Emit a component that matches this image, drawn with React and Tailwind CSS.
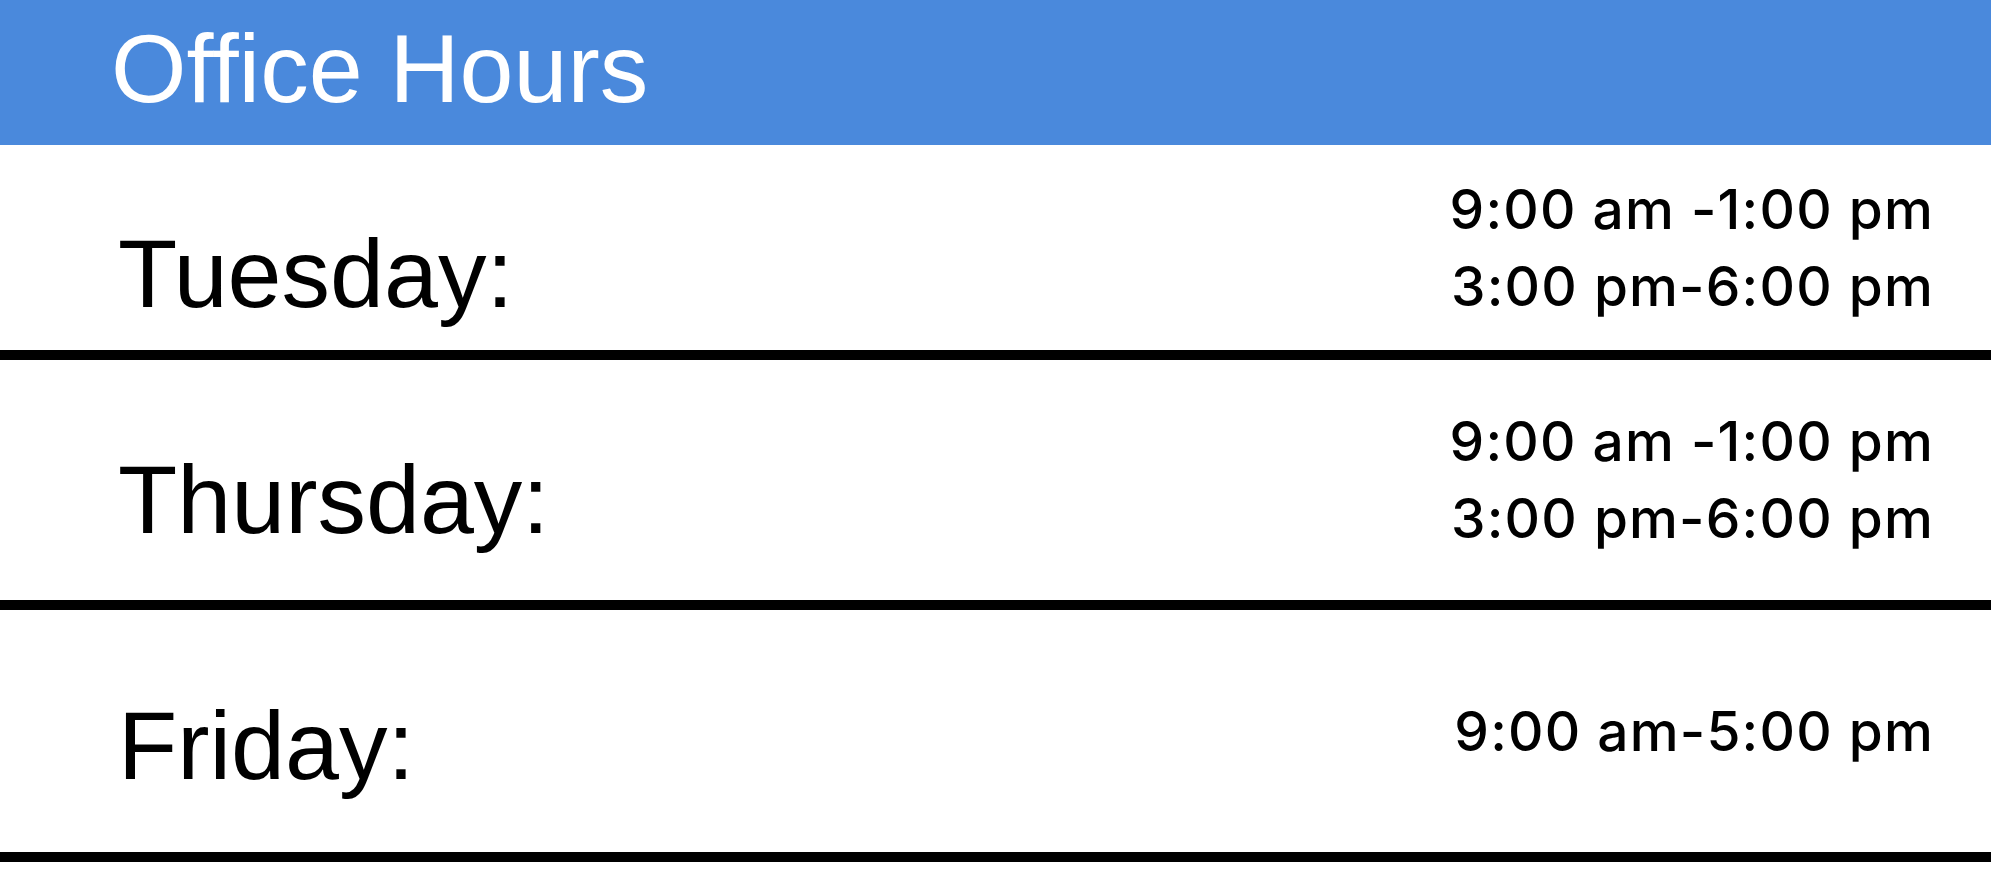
export default function App() {
  const rows = [
    { day: "Tuesday:", times: ["9:00 am -1:00 pm", "3:00 pm-6:00 pm"], h: "h-[215px]", dayPad: "pt-[80px]" },
    { day: "Thursday:", times: ["9:00 am -1:00 pm", "3:00 pm-6:00 pm"], h: "h-[250px]", dayPad: "pt-[91px]" },
    { day: "Friday:", times: ["9:00 am-5:00 pm"], h: "h-[252px]", dayPad: "pt-[87px]" },
  ];

  return (
    <div className="w-full min-h-screen bg-white">
      {/* Header */}
      <div className="h-[145px] bg-[#4a89dc] pl-[111px] pt-[20px]">
        <h1 className="text-white text-[97px] leading-[97px] font-['Liberation_Sans',Arial,sans-serif]">
          Office Hours
        </h1>
      </div>

      {rows.map((row) => (
        <div
          key={row.day}
          className={`flex justify-between border-b-[10px] border-black ${row.h}`}
        >
          <div className={`pl-[118px] ${row.dayPad} text-black text-[97px] leading-[97px] font-['Liberation_Sans',Arial,sans-serif]`}>
            {row.day}
          </div>
          <div className="self-center pr-[57px] text-right text-black text-[55px] leading-[77px] font-medium tracking-[1.2px] font-['Inter','DejaVu_Sans',sans-serif]">
            {row.times.map((t) => (
              <div key={t}>{t}</div>
            ))}
          </div>
        </div>
      ))}
    </div>
  );
}
